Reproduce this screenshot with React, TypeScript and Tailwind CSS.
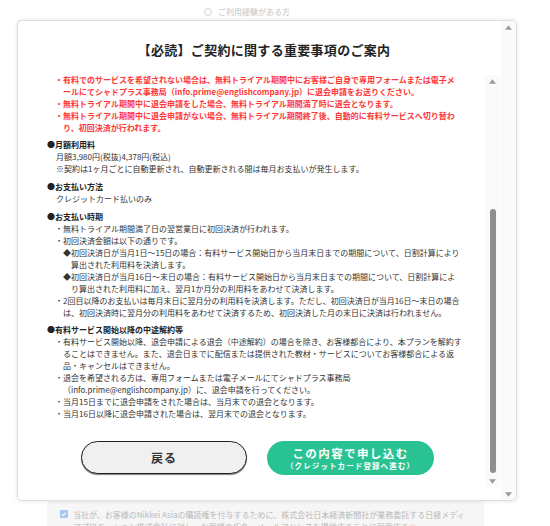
import React from 'react'

const jp = "font-['Noto_Sans_CJK_JP','Noto_Sans',sans-serif]"

type Lines = { lines: string[] }

// 箇条書き（・）の1項目。改行位置は元画面に合わせて固定
const Dot: React.FC<Lines> = ({ lines }) => (
  <li className="pl-[16px] -indent-[8px] whitespace-nowrap">
    {lines.map((l, i) => (
      <React.Fragment key={i}>
        {i > 0 && <br />}
        {l}
      </React.Fragment>
    ))}
  </li>
)

const Diamond: React.FC<Lines> = ({ lines }) => (
  <li className="pl-[24px] -indent-[8px] whitespace-nowrap">
    {lines.map((l, i) => (
      <React.Fragment key={i}>
        {i > 0 && <br />}
        {l}
      </React.Fragment>
    ))}
  </li>
)

const Heading: React.FC<{ children: React.ReactNode }> = ({ children }) => (
  <p className="font-bold text-[#222]">{children}</p>
)

const Arrow: React.FC<{ down?: boolean }> = ({ down }) => (
  <svg viewBox="0 0 8 5" className="w-[7px] h-[5px]">
    <path d={down ? 'M0 0h8L4 5z' : 'M0 5h8L4 0z'} fill="#9b9b9b" />
  </svg>
)

// スクロールバー（thumb が無い場合はトラックのみ）
const ScrollBar: React.FC<{ thumb?: number }> = ({ thumb }) => (
  <div className="w-[15px] shrink-0 bg-[#fafafa] flex flex-col">
    <div className="h-[12px] flex items-center justify-center">
      <Arrow />
    </div>
    <div className="flex-1 flex flex-col justify-end items-center pb-[2px]">
      {thumb && <div className="w-[6px] rounded-full bg-[#8e8e8e]" style={{ height: thumb }} />}
    </div>
    <div className="h-[12px] flex items-center justify-center">
      <Arrow down />
    </div>
  </div>
)

const App: React.FC = () => {
  return (
    <div className={`relative w-[550px] h-[526px] overflow-hidden bg-white ${jp}`}>
      {/* 背面のフォーム */}
      <div className="flex items-center gap-[6px] pl-[204px] pt-[6px] h-[18px] text-[8px] leading-[12px] text-[#c4c4c4]">
        <span className="w-[8px] h-[8px] rounded-full border border-[#d0d0d0]" />
        <span>ご利用経験がある方</span>
      </div>
      <div className="mt-[483px] ml-[47px] w-[437px] h-[40px] bg-[#f6f6f6] pt-[8px] pl-[13px] flex gap-[5px]">
        <span className="mt-[1px] w-[8px] h-[8px] shrink-0 rounded-[1px] bg-[#a8c7f0] flex items-center justify-center">
          <svg viewBox="0 0 10 10" className="w-[6px] h-[6px]">
            <path d="M1.5 5.2 4 7.5 8.5 2.5" fill="none" stroke="white" strokeWidth="1.8" />
          </svg>
        </span>
        <p className="text-[8px] leading-[12px] text-[#b9b9b9] whitespace-nowrap">
          当社が、お客様のNikkei Asiaの購読権を付与するために、株式会社日本経済新聞社が業務委託する日経メディ
          <br />
          アプロモーション株式会社に対し、お客様の氏名・メールアドレスを提供することに同意する
          <span className="text-[#f3a0a0]">＊</span>
        </p>
      </div>

      {/* モーダル */}
      <div className="absolute left-[17px] top-[20px] w-[500px] h-[481px] bg-white rounded-[5px] border border-[#dedede] shadow-[0_0_4px_rgba(0,0,0,0.12)] overflow-hidden flex">
        <div className="flex-1 min-w-0">
          <h2 className="pt-[20px] pl-[9px] text-center text-[13px] leading-[18px] tracking-[0.3px] font-bold text-[#222]">
            【必読】ご契約に関する重要事項のご案内
          </h2>

          <div className="mt-[16px] ml-[12px] w-[470px] h-[412px] flex">
            <div className="flex-1 min-w-0 overflow-hidden flex flex-col justify-end pl-[17px] text-[8px] leading-[12px] text-[#333]">
              <ul className="font-bold text-[#ff3838]">
                <Dot
                  lines={[
                    '・有料でのサービスを希望されない場合は、無料トライアル期間中にお客様ご自身で専用フォームまたは電子メ',
                    'ールにてシャドプラス事務局（info.prime@englishcompany.jp）に退会申請をお送りください。',
                  ]}
                />
                <Dot lines={['・無料トライアル期間中に退会申請をした場合、無料トライアル期間満了時に退会となります。']} />
                <Dot
                  lines={[
                    '・無料トライアル期間中に退会申請がない場合、無料トライアル期間終了後、自動的に有料サービスへ切り替わ',
                    'り、初回決済が行われます。',
                  ]}
                />
              </ul>

              <section className="mt-[5px]">
                <Heading>●月額利用料</Heading>
                <div className="pl-[9px]">
                  <p>月額3,980円(税抜)4,378円(税込)</p>
                  <p>※契約は1ヶ月ごとに自動更新され、自動更新される間は毎月お支払いが発生します。</p>
                </div>
              </section>

              <section className="mt-[6px]">
                <Heading>●お支払い方法</Heading>
                <p className="pl-[9px]">クレジットカード払いのみ</p>
              </section>

              <section className="mt-[6px]">
                <Heading>●お支払い時期</Heading>
                <ul>
                  <Dot lines={['・無料トライアル期間満了日の翌営業日に初回決済が行われます。']} />
                  <Dot lines={['・初回決済金額は以下の通りです。']} />
                </ul>
                <ul>
                  <Diamond
                    lines={[
                      '◆初回決済日が当月1日～15日の場合：有料サービス開始日から当月末日までの期間について、日割計算により',
                      '算出された利用料を決済します。',
                    ]}
                  />
                  <Diamond
                    lines={[
                      '◆初回決済日が当月16日～末日の場合：有料サービス開始日から当月末日までの期間について、日割計算によ',
                      'り算出された利用料に加え、翌月1か月分の利用料をあわせて決済します。',
                    ]}
                  />
                </ul>
                <ul>
                  <Dot
                    lines={[
                      '・2回目以降のお支払いは毎月末日に翌月分の利用料を決済します。ただし、初回決済日が当月16日～末日の場合',
                      'は、初回決済時に翌月分の利用料をあわせて決済するため、初回決済した月の末日に決済は行われません。',
                    ]}
                  />
                </ul>
              </section>

              <section className="mt-[5px]">
                <Heading>●有料サービス開始以降の中途解約等</Heading>
                <ul>
                  <Dot
                    lines={[
                      '・有料サービス開始以降、退会申請による退会（中途解約）の場合を除き、お客様都合により、本プランを解約す',
                      'ることはできません。また、退会日までに配信または提供された教材・サービスについてお客様都合による返',
                      '品・キャンセルはできません。',
                    ]}
                  />
                  <Dot
                    lines={[
                      '・退会を希望される方は、専用フォームまたは電子メールにてシャドプラス事務局',
                      '（info.prime@englishcompany.jp）に、退会申請を行ってください。',
                    ]}
                  />
                  <Dot lines={['・当月15日までに退会申請をされた場合は、当月末での退会となります。']} />
                  <Dot lines={['・当月16日以降に退会申請された場合は、翌月末での退会となります。']} />
                </ul>
              </section>

              <div className="mt-[21px] pb-[12px] flex justify-center gap-[20px] pr-[17px]">
                <button
                  type="button"
                  className="w-[166px] h-[33px] shrink-0 rounded-full bg-[#f0f0f0] border-[1.5px] border-[#222] shadow-[0_1px_1px_rgba(0,0,0,0.5)] text-[12px] font-bold text-[#333] tracking-[1px]"
                >
                  戻る
                </button>
                <button
                  type="button"
                  className="w-[167px] h-[34px] shrink-0 rounded-full bg-[#29c393] text-white font-bold flex flex-col items-center justify-center"
                >
                  <span className="text-[11.5px] leading-[15px] tracking-[1.4px]">この内容で申し込む</span>
                  <span className="text-[7.5px] leading-[10px] tracking-[1.1px]">（クレジットカード登録へ進む）</span>
                </button>
              </div>
            </div>
            <ScrollBar thumb={264} />
          </div>
        </div>
        <ScrollBar />
      </div>
    </div>
  )
}

export default App
